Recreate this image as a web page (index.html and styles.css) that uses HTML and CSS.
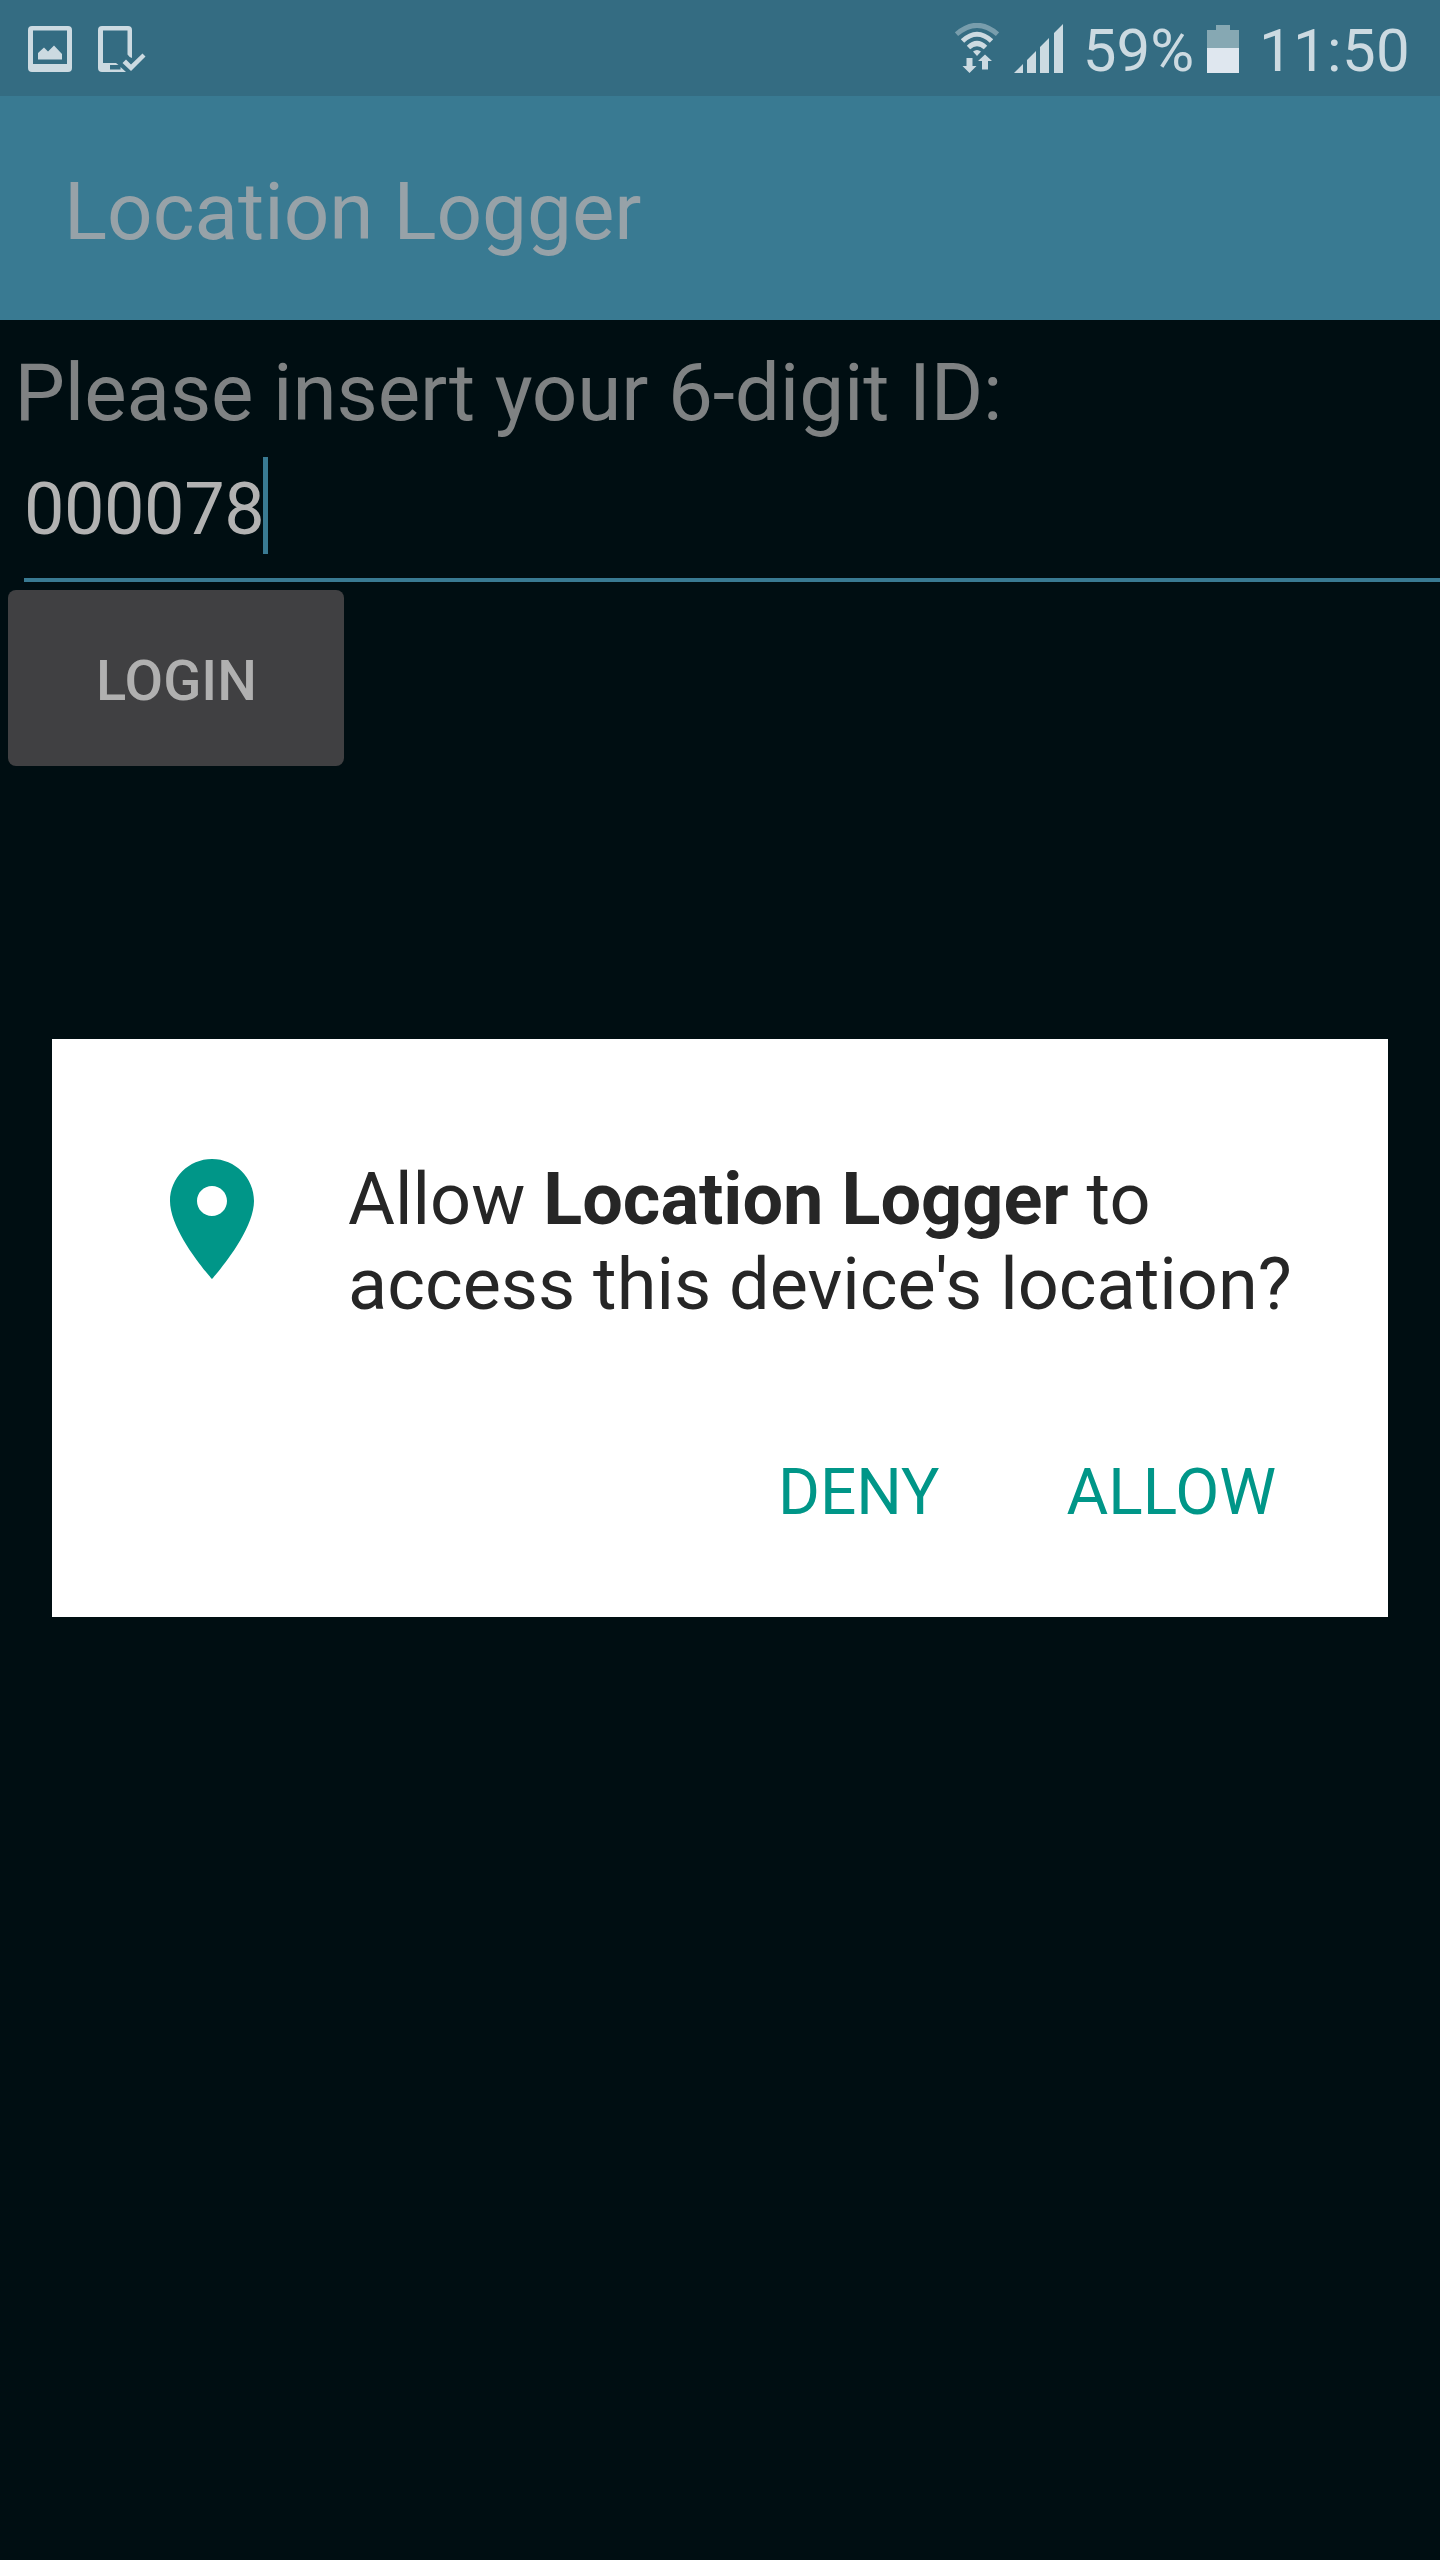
FILE: index.html
```html
<!DOCTYPE html>
<html lang="en">
<head>
<meta charset="utf-8">
<title>Location Logger</title>
<link rel="stylesheet" href="styles.css">
</head>
<body>
<div class="screen">
  <header class="status-bar">
    <div class="notifications">
      <svg class="icon-image" width="44" height="47" viewBox="0 0 44 47" fill="currentColor">
        <path fill-rule="evenodd" d="M4 0H40Q44 0 44 4V42Q44 46 40 46H4Q0 46 0 42V4Q0 0 4 0ZM5 4.500V38H39V4.500Z"/>
        <path d="M10 33.500V27L16 21.500L20 25.500L26 19.500L34 28V33.500Z"/>
      </svg>
      <svg class="icon-device" width="48" height="47" viewBox="0 0 48 47" fill="currentColor">
        <path d="M4 0H30Q34 0 34 4V32Q31 31 29.500 28.500V4.500H5V37H18L20.500 39H12V43.500H22.500V41L28 46H4Q0 46 0 42V4Q0 0 4 0Z"/>
        <path d="M24.500 37L28 33.500L33 38.500L44.500 27.500L47.500 30.500L33 45Z"/>
      </svg>
    </div>
    <div class="system">
      <svg class="icon-wifi" width="44" height="51" viewBox="0 0 44 51" fill="none" stroke="currentColor">
        <path d="M1.500 11.200Q22 -6.500 42.500 11.200" stroke-width="5" opacity=".45"/>
        <path d="M7.500 18Q22 4.500 36.500 18" stroke-width="5"/>
        <path d="M13.500 24.500Q22 16.500 30.500 24.500" stroke-width="5"/>
        <path d="M22 33L18 28.500Q22 25.500 26 28.500Z" fill="currentColor" stroke="none"/>
        <path d="M11.500 35H17.500V43H21.500L14.500 50L7.500 43H11.500ZM27 46.500H33V38H37L30 31.500L23 38H27Z" fill="currentColor" stroke="none"/>
      </svg>
      <svg class="icon-signal" width="49" height="49" viewBox="0 0 49 49" fill="currentColor">
        <path d="M0 49L9 40V49ZM13 36L22 27V49H13ZM26 23L35 14V49H26ZM40 9L49 0V49H40Z"/>
      </svg>
      <span class="percent">59%</span>
      <svg class="icon-battery" width="32" height="48" viewBox="0 0 32 48">
        <path d="M9 0H23V5H32V23H0V5H9Z" fill="#86a8b3"/>
        <path d="M0 23H32V48H0Z" fill="#dfe7ef"/>
      </svg>
      <span class="clock">11:50</span>
    </div>
  </header>
  <div class="app-bar"><h1 class="title">Location Logger</h1></div>
  <main class="form">
    <div class="label">Please insert your 6-digit ID:</div>
    <div class="field"><span class="value">000078</span><span class="caret"></span></div>
    <button class="login">LOGIN</button>
  </main>
  <section class="dialog" role="dialog">
    <div class="message">
      <svg class="pin" width="144" height="144" viewBox="0 0 24 24" fill="currentColor">
        <path d="M12 2C8.130 2 5 5.130 5 9c0 5.250 7 13 7 13s7-7.750 7-13c0-3.870-3.130-7-7-7zm0 9.500c-1.380 0-2.500-1.120-2.500-2.500s1.120-2.500 2.500-2.500 2.500 1.120 2.500 2.500-1.120 2.500-2.500 2.500z"/>
      </svg>
      <p class="question">Allow <b>Location Logger</b> to<br>access this device's location?</p>
    </div>
    <div class="actions">
      <button class="action">DENY</button>
      <button class="action">ALLOW</button>
    </div>
  </section>
</div>
</body>
</html>
```
FILE: styles.css
```css
* {
  box-sizing: border-box;
}

body {
  margin: 0;
  background: #000e12;
  font-family: Roboto, "Liberation Sans", sans-serif;
}

.screen {
  width: 1440px;
  height: 2560px;
  overflow: hidden;
}

svg {
  display: block;
  flex: none;
}

button {
  margin: 0;
  padding: 0;
  border: 0;
  background: none;
  font-family: inherit;
}

.status-bar {
  display: flex;
  justify-content: space-between;
  align-items: flex-start;
  height: 96px;
  padding: 0 30px 0 28px;
  background: #346c82;
  color: #ccdae1;
  font-size: 60px;
  line-height: 70px;
}

.notifications {
  display: flex;
  gap: 26px;
  padding-top: 26px;
}

.system {
  display: flex;
  align-items: flex-start;
}

.icon-wifi {
  margin: 23px 15px 0 0;
}

.icon-signal {
  margin: 24px 20px 0 0;
}

.percent {
  padding-top: 16px;
}

.icon-battery {
  margin: 25px 20px 0 13px;
}

.clock {
  padding-top: 16px;
  letter-spacing: 0.3px;
}

.app-bar {
  display: flex;
  align-items: center;
  height: 224px;
  padding: 8px 64px 0;
  background: #397a92;
}

.title {
  margin: 0;
  color: #97a2a8;
  font-size: 80px;
  font-weight: 400;
  line-height: 94px;
}

.form {
  padding-top: 26px;
}

.label {
  padding-left: 14.5px;
  color: #7f8283;
  font-size: 80px;
  line-height: 94px;
  letter-spacing: -0.12px;
}

.field {
  display: flex;
  align-items: flex-start;
  height: 125px;
  margin: 17px 0 8px 24px;
  border-bottom: 4px solid #397a92;
  color: #b2b2b2;
  font-size: 72px;
  line-height: 84px;
}

.value {
  padding-top: 11px;
  letter-spacing: -0.43px;
}

.caret {
  width: 5px;
  height: 97px;
  margin-left: -1px;
  background: #397a92;
}

.login {
  display: block;
  width: 336px;
  height: 176px;
  margin-left: 8px;
  padding: 6px 0 0 1px;
  border-radius: 8px;
  background: #404042;
  color: #b0b0b0;
  font-size: 56px;
  font-weight: 500;
  line-height: 66px;
}

.dialog {
  width: 1336px;
  height: 578px;
  margin: 273px auto 0;
  padding: 108px 88px 0;
  background: #fff;
}

.message {
  display: flex;
  gap: 64px;
}

.pin {
  color: #009688;
}

.question {
  margin: 10px 0 0;
  color: #262626;
  font-size: 72px;
  line-height: 85px;
  letter-spacing: 0.03px;
  white-space: nowrap;
}

.actions {
  display: flex;
  justify-content: flex-end;
  gap: 127px;
  margin-top: 128px;
  padding-right: 24px;
}

.action {
  color: #009688;
  font-size: 64px;
  line-height: 76px;
}
```
